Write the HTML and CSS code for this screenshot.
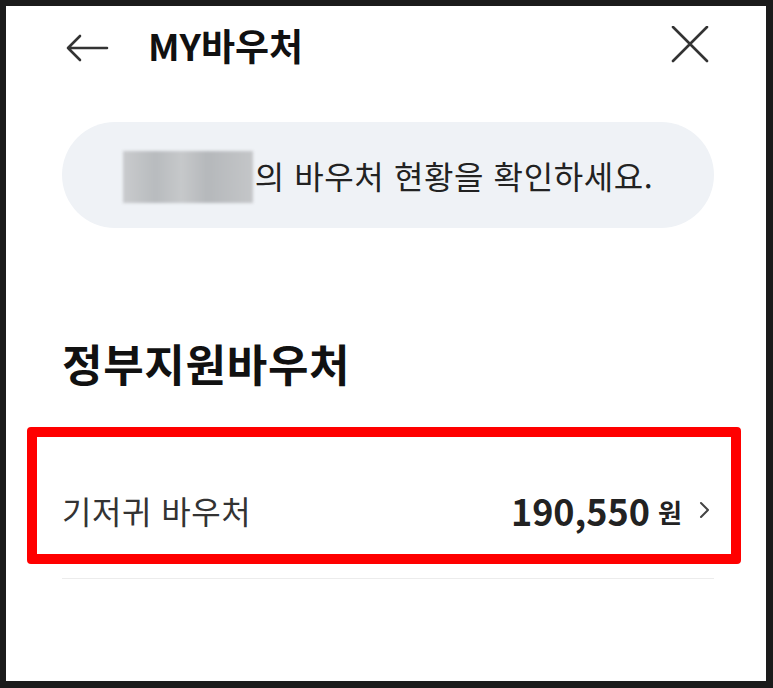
FILE: index.html
```html
<!DOCTYPE html>
<html lang="ko">
<head>
<meta charset="utf-8">
<title>MY바우처</title>
<link rel="stylesheet" href="styles.css">
</head>
<body>
<div class="screen">
  <header class="topbar">
    <svg class="icon-back" width="44" height="40" viewBox="0 0 44 40">
      <path d="M2 22 H41 M14 10 L2 22 L14 34" fill="none" stroke="#333" stroke-width="2.6" stroke-linecap="round" stroke-linejoin="round"/>
    </svg>
    <h1 class="title">MY바우처</h1>
    <svg class="icon-close" width="40" height="40" viewBox="0 0 40 40">
      <path d="M3 1 L37 35 M37 1 L3 35" fill="none" stroke="#333" stroke-width="2.6" stroke-linecap="round"/>
    </svg>
  </header>
  <main class="content">
    <div class="notice">
      <span class="blurname"></span><span class="notice-text">의 바우처 현황을 확인하세요.</span>
    </div>
    <h2 class="section-title">정부지원바우처</h2>
    <div class="voucher-row">
      <span class="voucher-name">기저귀 바우처</span>
      <span class="voucher-amount"><b class="num">190,550</b><b class="won">원</b>
        <svg class="chev" width="14" height="20" viewBox="0 0 14 20"><path d="M3 3 L10 10 L3 17" fill="none" stroke="#444" stroke-width="2" stroke-linecap="round" stroke-linejoin="round"/></svg>
      </span>
      <div class="highlight"></div>
    </div>
  </main>
</div>
</body>
</html>
```

FILE: styles.css
```css
html, body {
  margin: 0;
  padding: 0;
  background: #1b1b1b;
}
body {
  width: 773px;
  height: 688px;
  overflow: hidden;
  font-family: "Noto Sans CJK KR", "Noto Sans", sans-serif;
  color: #222;
}
.screen {
  margin: 6px 7px 7px 6px;
  width: 760px;
  height: 675px;
  background: #fff;
  overflow: hidden;
}
.topbar {
  height: 78px;
  display: flex;
  align-items: center;
  padding: 0 56px 0 60px;
}
.icon-back {
  display: block;
  flex: none;
  margin-top: 2px;
}
.title {
  margin: 0 0 0 38px;
  font-size: 37px;
  font-weight: 700;
  color: #111;
  letter-spacing: 0;
  flex: 1;
  line-height: 40px;
}
.icon-close {
  display: block;
  flex: none;
  margin-top: 2px;
}
.content {
  padding: 0 52px 0 56px;
}
.notice {
  margin-top: 38px;
  height: 106px;
  border-radius: 53px;
  background: #eff2f6;
  display: flex;
  align-items: center;
  justify-content: center;
}
.blurname {
  display: inline-block;
  width: 130px;
  height: 52px;
  background: linear-gradient(90deg, #c9cbcd 0%, #b8bbbe 25%, #c6c8ca 45%, #b5b8bb 65%, #c4c6c8 100%);
  filter: blur(1.5px);
  margin-top: 4px;
}
.notice-text {
  font-size: 32px;
  color: #222;
  margin-left: 2px;
  letter-spacing: 0.6px;
}
.section-title {
  margin: 107px 0 0 0;
  font-size: 44px;
  line-height: 56px;
  font-weight: 700;
  color: #111;
  letter-spacing: 0.7px;
}
.voucher-row {
  position: relative;
  margin-top: 50px;
  height: 137px;
  border-bottom: 1px solid #ececec;
  display: flex;
  align-items: center;
  justify-content: space-between;
}
.voucher-name {
  font-size: 32px;
  color: #333;
  letter-spacing: 0.5px;
}
.voucher-amount {
  display: flex;
  align-items: center;
}
.num {
  font-size: 36px;
  font-weight: 700;
  color: #222;
  letter-spacing: 0;
}
.won {
  font-size: 26px;
  font-weight: 700;
  color: #222;
  margin-left: 8px;
  margin-top: 4px;
}
.chev {
  margin-left: 16px;
  margin-right: 2px;
  display: block;
}
.highlight {
  position: absolute;
  left: -35px;
  top: -14px;
  width: 694px;
  height: 117px;
  border: 10px solid #ff0000;
  border-radius: 4px;
}
```
